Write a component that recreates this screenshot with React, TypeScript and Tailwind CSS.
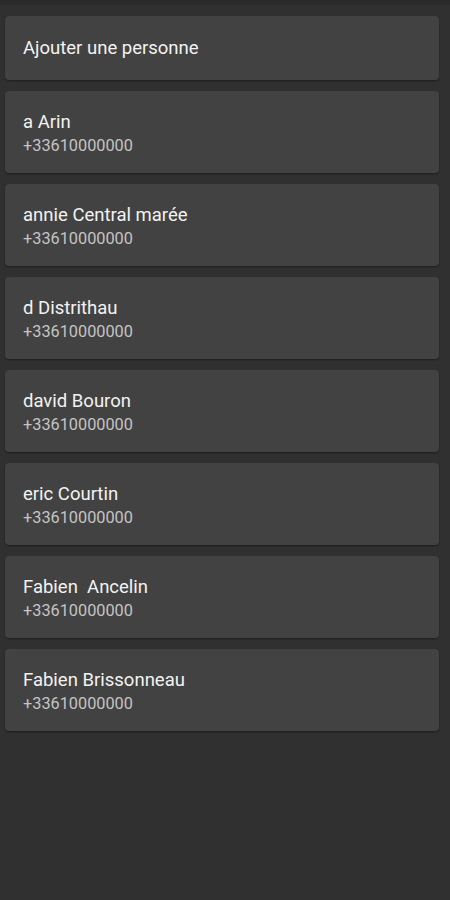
const contacts = [
  { name: "a Arin", phone: "+33610000000" },
  { name: "annie Central marée", phone: "+33610000000" },
  { name: "d Distrithau", phone: "+33610000000" },
  { name: "david Bouron", phone: "+33610000000" },
  { name: "eric Courtin", phone: "+33610000000" },
  { name: "Fabien  Ancelin", phone: "+33610000000" },
  { name: "Fabien Brissonneau", phone: "+33610000000" },
];

export default function App() {
  return (
    <div className="min-h-[900px] bg-[#303030] font-['Roboto',sans-serif]">
      <div className="h-[5px] bg-[#2a2a2a]" />
      <div className="flex flex-col gap-[11px] pt-[11px] pl-[5px] pr-[11px]">
        {/* Ajouter */}
        <div className="h-[64px] flex items-center pt-[2px] px-[18px] rounded-[4px] bg-[#424242] shadow-[0_1px_2px_rgba(0,0,0,0.4)]">
          <span className="text-[18.5px] text-[#f2f2f2]">Ajouter une personne</span>
        </div>

        {contacts.map((c) => (
          <div
            key={c.name}
            className="h-[82px] flex flex-col justify-center pt-[3px] px-[18px] rounded-[4px] bg-[#424242] shadow-[0_1px_2px_rgba(0,0,0,0.4)]"
          >
            <span className="text-[18.5px] leading-[24px] text-[#f2f2f2] whitespace-pre">{c.name}</span>
            <span className="text-[16.3px] leading-[24px] text-[#c4c4c4]">{c.phone}</span>
          </div>
        ))}
      </div>
    </div>
  );
}
